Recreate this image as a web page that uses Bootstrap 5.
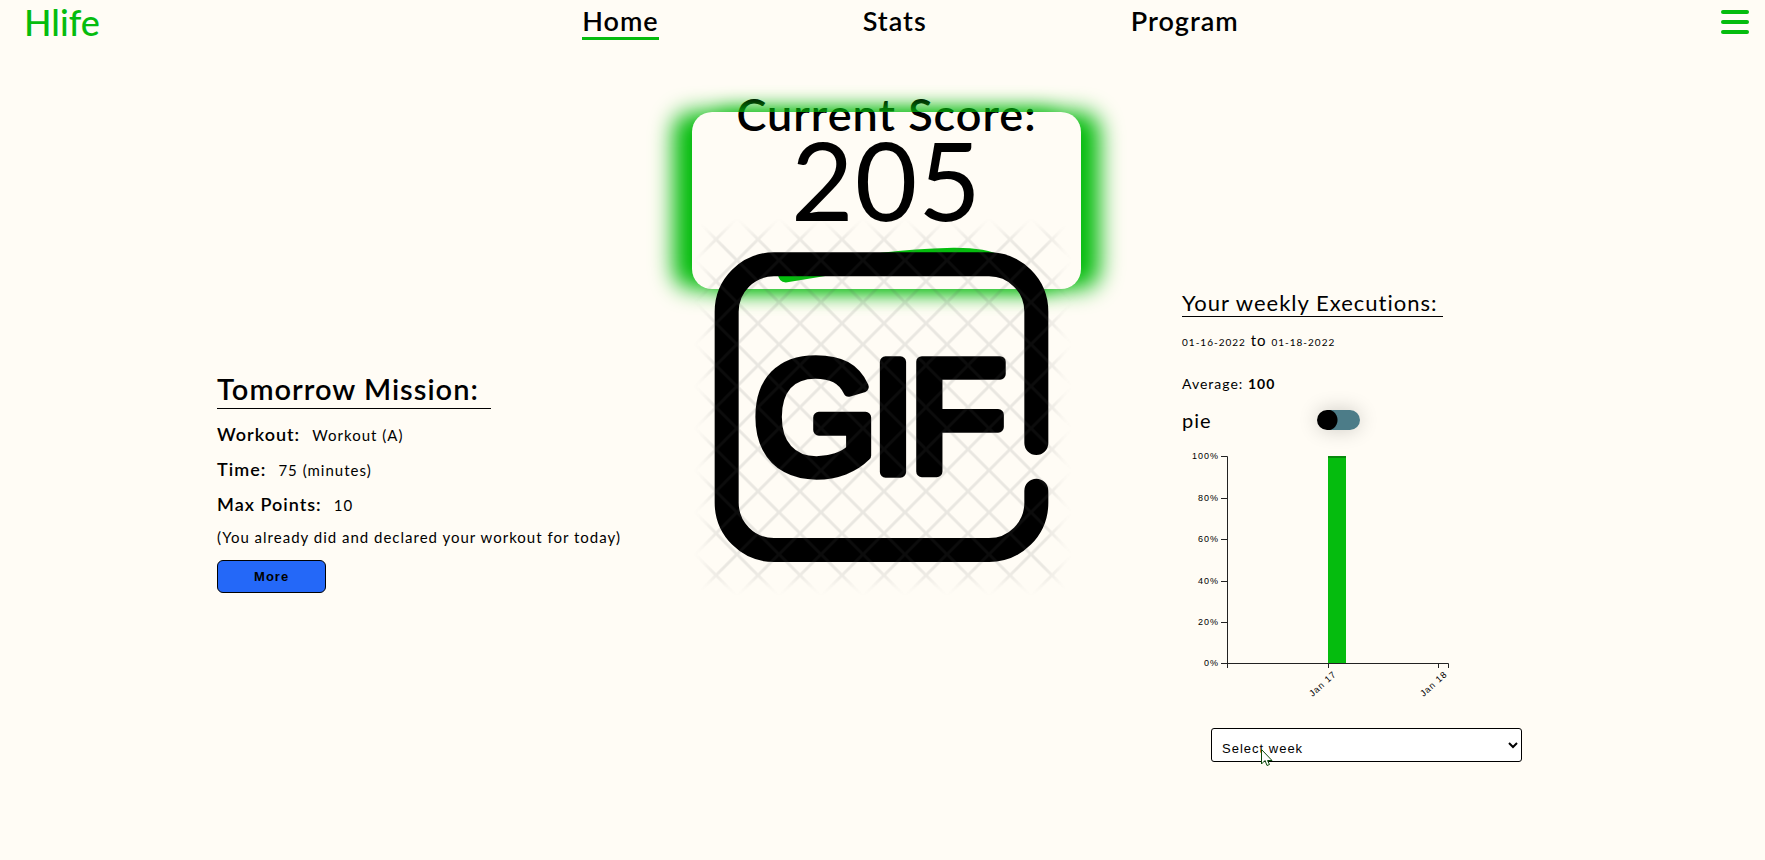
<!DOCTYPE html>
<html lang="en">
<head>
<meta charset="utf-8">
<meta name="viewport" content="width=device-width, initial-scale=1">
<title>Hlife</title>
<link href="https://cdn.jsdelivr.net/npm/bootstrap@5.3.0/dist/css/bootstrap.min.css" rel="stylesheet">
<style>
:root { --brand: #05bc0e; }
body { font-family: Lato, "Liberation Sans", sans-serif; letter-spacing: 1px; background: #fffcf5; color: #000; min-height: 100vh; overflow-x: hidden; }
.topbar { padding: 0 16px 0 24px; height: 44px; }
.brand-link { color: var(--brand); font-size: 36px; line-height: 44px; font-weight: 500; letter-spacing: 0; text-decoration: none; }
.topbar-links { gap: 204px; }
.topbar-links a { display: block; color: #000; font-size: 27px; line-height: 32px; font-weight: 600; text-decoration: none; border-bottom: 3px solid transparent; }
.topbar-links a.active { border-color: var(--brand); }
.menu-btn { width: 28px; padding: 0; border: 0; background: none; gap: 6px; }
.menu-btn span { height: 4px; border-radius: 2px; background: var(--brand); }
.board { display: grid; grid-template-columns: 475fr 490fr 583fr; padding-left: 12.3%; }
.mission { margin-top: 326px; }
.mission h2 { font-size: 29px; line-height: 38px; font-weight: 600; border-bottom: 1px solid #000; padding-right: 12px; width: fit-content; margin: 0 0 8px; }
.mission dl { margin: 0; }
.mission dl div { line-height: 35px; }
.mission dt { font-size: 18px; font-weight: 600; display: inline; margin-right: 7px; }
.mission dd, .note { font-size: 15px; display: inline; margin: 0; }
.mission dd { line-height: 20px; }
.note { display: block; line-height: 30px; margin-bottom: 8px; }
.more-btn { width: 109px; height: 33px; padding: 0; font: bold 13px "Liberation Sans", sans-serif; letter-spacing: 1px; background: #2468f8; border: 1px solid #000; border-radius: 6px; color: #000; }
.score { width: 389px; margin-top: 44px; text-align: center; }
.score h1 { font-size: 45px; line-height: 52px; font-weight: 600; margin: 0 0 -28px; }
.score-card { position: relative; height: 177px; border-radius: 20px; box-shadow: -19px 0 22px var(--brand), 19px 0 22px var(--brand); }
.score-card output { display: block; font-size: 108px; line-height: 134px; }
.score-art { position: relative; display: block; width: 400px; margin: -79px 0 0 -12px; }
.weekly { margin-top: 242px; }
.weekly h2 { font-size: 22px; line-height: 26px; padding: 4px 6px 0 0; font-weight: 400; border-bottom: 1px solid #000; width: fit-content; margin: 0; }
.dates { font-size: 15px; line-height: 24px; margin: 11px 0 20px; }
.dates time { font-size: 10px; }
.average { font-size: 14px; line-height: 20px; margin: 0 0 14px; }
.pie-row { height: 24px; margin-bottom: 18px; }
.pie-row label { font-size: 20px; line-height: 24px; width: 135px; }
.pie-row input { appearance: none; width: 43px; height: 20px; margin: 0; border-radius: 10px; background: radial-gradient(circle at 10px 10px, #000 10px, #4c7c88 11px); box-shadow: 0 0 20px rgba(0,0,0,.2); }
.plot { display: block; width: 280px; height: 272px; margin-bottom: 6px; font: 10px "Liberation Sans", sans-serif; letter-spacing: 1px; }
.picker { position: relative; width: 311px; margin-left: 29px; }
.picker select { width: 100%; height: 34px; padding: 7px 0 0 6px; font: 13px "Liberation Sans", sans-serif; letter-spacing: 1px; border: 1px solid #000; border-radius: 3px; background: #fff; color: #000; }
.pointer { position: absolute; left: 49px; top: 20px; }
</style>
</head>
<body>
<nav class="topbar d-flex justify-content-between align-items-center">
  <a class="brand-link" href="#">Hlife</a>
  <ul class="topbar-links list-unstyled d-flex m-0">
    <li><a class="active" href="#" aria-current="page">Home</a></li>
    <li><a href="#">Stats</a></li>
    <li><a href="#">Program</a></li>
  </ul>
  <button class="menu-btn d-flex flex-column" type="button" aria-label="Menu"><span></span><span></span><span></span></button>
</nav>
<main class="board">
  <section class="mission">
    <h2>Tomorrow Mission:</h2>
    <dl>
      <div><dt>Workout:</dt> <dd>Workout (A)</dd></div>
      <div><dt>Time:</dt> <dd>75 (minutes)</dd></div>
      <div><dt>Max Points:</dt> <dd>10</dd></div>
    </dl>
    <p class="note">(You already did and declared your workout for today)</p>
    <button class="more-btn" type="button">More</button>
  </section>
  <section class="score">
    <h1>Current Score:</h1>
    <div class="score-card"><output>205</output></div>
    <svg class="score-art" viewBox="0 0 1200 1200" role="img" aria-label="GIF">
      <defs>
        <pattern id="lattice" x="45" y="25" width="126" height="126" patternUnits="userSpaceOnUse">
          <path d="M0 0L126 126M126 0L0 126" stroke="#606060" stroke-width="9" stroke-linecap="square"/>
        </pattern>
        <filter id="soft"><feGaussianBlur stdDeviation="22"/></filter>
        <mask id="fade"><rect x="82" y="66" width="1050" height="1050" fill="#fff" filter="url(#soft)"/></mask>
      </defs>
      <path d="M293 190Q296 220 322 217Q560 175 780 160L1000 165Q960 112 820 113Q700 116 605 128L310 180Z" fill="#05bc0e"/>
      <path d="M1069 699V305A142 142 0 0 0 927 163H282A142 142 0 0 0 140 305V878A142 142 0 0 0 282 1020H927A142 142 0 0 0 1069 878V842" fill="none" stroke="#000" stroke-width="72" stroke-linecap="round"/>
      <text x="219 572 686" y="785" font-family="Liberation Sans, sans-serif" font-size="480" stroke="#000" stroke-width="34" stroke-linejoin="round">GIF</text>
      <rect x="20" y="10" width="1170" height="1170" fill="url(#lattice)" opacity=".13" mask="url(#fade)"/>
    </svg>
  </section>
  <section class="weekly">
    <h2>Your weekly Executions:</h2>
    <p class="dates"><time>01-16-2022</time> to <time>01-18-2022</time></p>
    <p class="average">Average: <b>100</b></p>
    <div class="pie-row d-flex align-items-center"><label for="pie">pie</label><input id="pie" type="checkbox" role="switch"></div>
    <svg class="plot" viewBox="0 0 280 272" role="img" aria-label="Weekly executions">
      <rect x="146" y="6" width="18" height="207" fill="#05bc0e"/>
      <rect x="146" y="6" width="18" height="2" fill="#078a0c"/>
      <path d="M39 6.500H45.500V218M39 48.500H45M39 89.500H45M39 131.500H45M39 172.500H45M39 213.500H266.500V218M146.500 213V218M256.500 213V218" fill="none" stroke="#222"/>
      <g text-anchor="end" font-size="9">
        <text x="37" y="9">100%</text><text x="37" y="51">80%</text><text x="37" y="92">60%</text>
        <text x="37" y="134">40%</text><text x="37" y="175">20%</text><text x="37" y="216">0%</text>
        <text transform="translate(155 225) rotate(-42)">Jan 17</text>
        <text transform="translate(266 225) rotate(-42)">Jan 18</text>
      </g>
    </svg>
    <div class="picker">
      <select aria-label="Select week"><option>Select week</option></select>
      <svg class="pointer" width="14" height="21" viewBox="0 0 14 21" aria-hidden="true"><path d="M1.500 1.500V16L5 12.500L7 17.500L9.500 16.500L7.500 12.500H12Z" fill="#fff" stroke="#0a4a0a"/></svg>
    </div>
  </section>
</main>
<script src="https://cdn.jsdelivr.net/npm/bootstrap@5.3.0/dist/js/bootstrap.bundle.min.js"></script>
</body>
</html>
